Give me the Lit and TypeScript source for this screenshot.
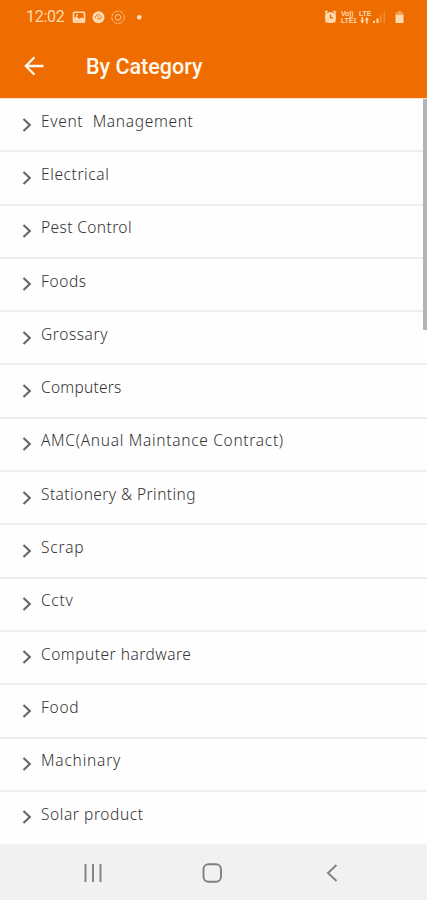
import { LitElement, html, css } from "lit";
import { customElement } from "lit/decorators.js";
import { styleMap } from "lit/directives/style-map.js";

interface Category { label: string; tracking: number }

const categories: Category[] = [
  { label: "Event  Management", tracking: 0.67 },
  { label: "Electrical", tracking: 0.6 },
  { label: "Pest Control", tracking: 0.4 },
  { label: "Foods", tracking: 0.6 },
  { label: "Grossary", tracking: 0.58 },
  { label: "Computers", tracking: 0.25 },
  { label: "AMC(Anual Maintance Contract)", tracking: 0.7 },
  { label: "Stationery & Printing", tracking: 0.43 },
  { label: "Scrap", tracking: 0.85 },
  { label: "Cctv", tracking: 0.7 },
  { label: "Computer hardware", tracking: 0.5 },
  { label: "Food", tracking: 0.7 },
  { label: "Machinary", tracking: 0.8 },
  { label: "Solar product", tracking: 0.57 },
];

@customElement("status-bar")
class StatusBar extends LitElement {
  static styles = css`
    :host { display: flex; align-items: center; height: 34px; padding: 0 23px 0 26px; color: #ffd9b0; }
    .time { font: 400 16px/34px Roboto, sans-serif; width: 46px; letter-spacing: -0.3px; }
    .left { display: block; }
    .grow { flex: 1; }
    .alarm { margin-right: 4px; }
    .net { display: flex; flex-direction: column; font: 700 7px/7px "Liberation Sans", sans-serif; width: 15px; white-space: nowrap; letter-spacing: -.2px; }
    .net.lte { width: 12px; margin-left: 3px; }
    .net svg { display: block; margin-left: 1px; }
    .signal { margin-left: 2px; }
    .battery { margin-left: 9px; }
  `;
  render() {
    return html`
      <span class="time">12:02</span>
      <svg class="left" width="76" height="16" viewBox="0 0 76 16" fill="none" stroke="currentColor">
        <rect x="1.5" y="3.3" width="11" height="10" rx=".8" stroke-width="1.6" />
        <path d="M1.5 12.8V10l3-3 3 3 2-1.6 3 1.4v3z" fill="currentColor" stroke="none" />
        <circle cx="5" cy="6" r="1" fill="currentColor" stroke="none" />
        <circle cx="26.5" cy="8.3" r="6" fill="currentColor" stroke="none" />
        <path d="M23.200 9.500c-.5-4.500 5.500-5 6-2 .4 3-3.700 3.500-4.200 1.500M25 6.500l3 3" stroke="#ef6c00" stroke-width=".8" />
        <circle cx="46" cy="8.3" r="6.2" stroke-width="1" opacity=".75" stroke-dasharray="4 1" />
        <circle cx="46" cy="8.3" r="2.8" stroke-width="1" opacity=".85" />
        <circle cx="67.3" cy="8.3" r="2.4" fill="currentColor" stroke="none" />
      </svg>
      <span class="grow"></span>
      <svg class="alarm" width="13" height="14" viewBox="0 0 13 14">
        <path d="M1 2.5 3.5 1M12 2.5 9.5 1" stroke="currentColor" stroke-width="1.8" />
        <path d="M1.500 3h10v9.500h-10z" fill="currentColor" />
        <circle cx="6.500" cy="7.500" r="5.500" fill="currentColor" />
        <path d="M6.500 4.500v3.300H9" fill="none" stroke="#ef6c00" stroke-width="1.300" />
      </svg>
      <span class="net"><span>Vo))</span><span>LTE1</span></span>
      <span class="net lte"><span>LTE</span>
        <svg width="9" height="7" viewBox="0 0 9 7" fill="currentColor"><path d="M1.500 0h1.600v3.500h1.300L2.300 6.500.2 3.500h1.300zM6 6.500h1.600V3h1.200L6.800 0 4.800 3H6z" /></svg>
      </span>
      <svg class="signal" width="13" height="14" viewBox="0 0 13 14" fill="currentColor">
        <path d="M0 11h2v2H0zM3.500 8.500h2V13h-2z" />
        <path d="M7 5h1.500v8H7zM10.500 2H12v11h-1.500z" opacity=".3" />
      </svg>
      <svg class="battery" width="9" height="14" viewBox="0 0 9 14" fill="currentColor">
        <path d="M3 1h3v1.500h2.500v3H.5v-3H3z" opacity=".5" />
        <path d="M.5 5h8v8h-8z" />
      </svg>
    `;
  }
}

@customElement("category-row")
class CategoryRow extends LitElement {
  static properties = { label: {}, tracking: { type: Number } };
  declare label: string;
  declare tracking: number;
  static styles = css`
    :host { display: flex; box-sizing: border-box; height: 53.3px; padding-left: 22px; border-bottom: 2px solid #eeeeee; }
    svg { display: block; flex: none; margin-top: 17.500px; }
    span { margin-left: 9px; font: 300 15.500px/22px "Noto Sans", "Open Sans", sans-serif; color: #333; white-space: pre; margin-top: 10.700px; }
  `;
  render() {
    return html`
      <svg width="10" height="16" viewBox="0 0 10 16"><path d="M1.500 1.900 7.800 7.900 1.500 13.900" fill="none" stroke="#666" stroke-width="2.100" /></svg>
      <span style=${styleMap({ letterSpacing: `${this.tracking}px` })}>${this.label}</span>
    `;
  }
}

@customElement("app-root")
class AppRoot extends LitElement {
  static styles = css`
    :host { display: flex; flex-direction: column; position: relative; width: 427px; height: 900px; background: #fefefe; overflow: hidden; }
    header { flex: none; height: 98px; background: #ef6c00; }
    .bar { display: flex; align-items: center; height: 64px; padding-left: 24px; }
    h1 { margin: 2px 0 0 42px; font: 500 21.500px/64px Roboto, sans-serif; color: #fff8ee; }
    main { flex: 1; overflow: hidden; border-top: 1px solid #ffe3c4; box-sizing: border-box; }
    category-row:last-child { border-bottom-color: transparent; }
    .thumb { position: absolute; right: 0; top: 99px; width: 4px; height: 231px; background: #b5b5b5; }
    nav { flex: none; height: 56px; background: #f1f1f1; }
    nav svg { display: block; }
  `;
  render() {
    return html`
      <header>
        <status-bar></status-bar>
        <div class="bar">
          <svg width="20" height="20" viewBox="0 0 20 20" fill="none" stroke="#fff8ee" stroke-width="2.300"><path d="M19.500 10H2M10.500 1.300 1.800 10l8.700 8.700" /></svg>
          <h1>By Category</h1>
        </div>
      </header>
      <main>${categories.map((c) => html`<category-row .label=${c.label} .tracking=${c.tracking}></category-row>`)}</main>
      <div class="thumb"></div>
      <nav>
        <svg width="427" height="56" viewBox="0 0 427 56" fill="none" stroke="#808080" stroke-width="1.900">
          <path d="M85.500 20v18M93 20v18M100.500 20v18" />
          <rect x="203.500" y="20.300" width="17.500" height="17.500" rx="5" />
          <path d="m336.500 21-8.500 8 8.500 8" />
        </svg>
      </nav>
    `;
  }
}
